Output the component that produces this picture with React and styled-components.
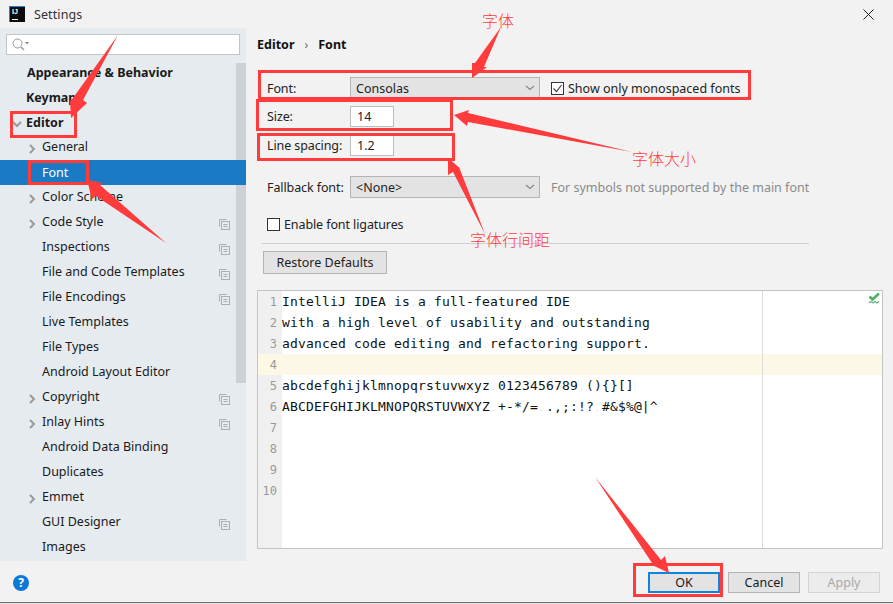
import React from 'react';
import styled, { createGlobalStyle } from 'styled-components';

const Global = createGlobalStyle`
  html, body { margin: 0; padding: 0; background: #fff; }
  * { box-sizing: border-box; }
  body { font-family: "Noto Sans", "Noto Sans CJK SC", sans-serif; font-size: 12.5px; color: #1a1a1a; }
`;
const Dialog = styled.div`
  position: relative; width: 893px; height: 604px; overflow: hidden;
  display: flex; flex-direction: column; background: #f2f2f2;
  border-bottom: 1px solid #e8e8e8;
`;
const TitleBar = styled.header`
  height: 28px; flex: none; display: flex; align-items: center; padding: 0 19px 0 9px;
`;
const Logo = styled.div`
  width: 16px; height: 16px; background: #0b0b0b; border-top: 1px solid #2a7fd0; border-left: 1px solid #2a7fd0;
  color: #fff; font: bold 7px/10px "Liberation Sans", sans-serif; padding-left: 2px; position: relative;
  &::after { content: ""; display: block; width: 6px; height: 1px; background: #fff; margin-top: 2px; }
`;
const Title = styled.span`
  margin-left: 9px; flex: 1; font-size: 12.5px; color: #333; letter-spacing: .1px;
`;
const Body = styled.div`
  flex: 1; display: flex; min-height: 0;
`;
const Sidebar = styled.aside`
  width: 246px; flex: none; background: #e6ebf0; display: flex; flex-direction: column; position: relative; overflow: hidden;
`;
const SearchBox = styled.div`
  flex: none; margin: 6px 6px 5px 6px; height: 21px; background: #fff; border: 1px solid #c4c4c4;
  display: flex; align-items: center; padding-left: 5px;
`;
const Tree = styled.ul`
  list-style: none; margin: 0; padding: 0; flex: 1; position: relative;
`;
const Row = styled.li`
  height: 25px; display: flex; align-items: center; position: relative;
  padding-bottom: ${p => (p.$bold || p.$selected ? 1 : 2)}px;
  padding-left: ${p => p.$indent}px;
  font-weight: ${p => (p.$bold ? 700 : 400)};
  background: ${p => (p.$selected ? '#1a7bc4' : 'transparent')};
  color: ${p => (p.$selected ? '#fff' : '#1a1a1a')};
  z-index: 1;
`;
const Chevron = styled.span`
  position: absolute; left: ${p => p.$left}px; top: 6px; width: 10px; height: 10px; display: block;
`;
const Badge = styled.span`
  position: absolute; left: 219px; top: 7px; width: 11px; height: 11px;
`;
const Scroll = styled.div`
  position: absolute; top: 35px; right: 0; width: 10px; height: 320px; background: #cdd0d4; z-index: 0;
`;
const Panel = styled.main`
  flex: 1; min-width: 0; display: flex; flex-direction: column; padding: 8px 10px 11px 11px;
`;
const Crumbs = styled.div`
  height: 17px; display: flex; align-items: center; font-weight: 700; font-size: 12.5px; gap: 10px; color: #111;
`;
const Sep = styled.span`
  font-weight: 400; color: #666; font-size: 12px;
`;
const FormRow = styled.div`
  display: flex; align-items: center; padding-left: 10px; height: ${p => p.$h || 22}px; margin-top: ${p => p.$mt || 0}px;
`;
const Label = styled.label`
  width: 83px; flex: none; color: #222; letter-spacing: -.1px;
`;
const Select = styled.div`
  width: 190px; height: 22px; background: #e3e3e3; border: 1px solid #b4b4b4; display: flex; align-items: center;
  justify-content: space-between; padding: 0 4px 0 5px; font-size: 12.5px; color: #222;
`;
const Input = styled.div`
  width: 44px; height: ${p => p.$h || 21}px; background: #fff; border: 1px solid #bdbdbd; display: flex; align-items: center;
  padding-left: 6px; color: #222;
`;
const Check = styled.span`
  width: 13px; height: 13px; flex: none; background: #fff; border: 1px solid #333; display: flex; align-items: center; justify-content: center;
  margin-left: ${p => p.$ml || 0}px;
`;
const CheckText = styled.span`
  margin-left: 4px; color: #222; letter-spacing: ${p => (p.$tight ? '-.1px' : '0')};
`;
const Hint = styled.span`
  margin-left: 11px; color: #8a8a8a;
`;
const Divider = styled.hr`
  width: 547px; height: 1px; margin: 12px 0 0 5px; border: 0; background: #cfcfcf; flex: none;
`;
const Restore = styled.button`
  width: 124px; height: 23px; margin: 7px 0 0 6px; flex: none; background: #e3e3e3; border: 1px solid #b4b4b4;
  font: inherit; color: #222; padding: 0;
`;
const Editor = styled.section`
  flex: none; height: 259px; margin-top: 16px; background: #fff; border: 1px solid #c4c4c4; position: relative; display: flex; width: 626px;
`;
const Gutter = styled.div`
  width: 24px; flex: none; background: #f0f0f0;
`;
const Lines = styled.div`
  flex: 1; position: relative; font: 13px/21px "DejaVu Sans Mono", monospace; letter-spacing: .17px; color: #111;
`;
const Line = styled.div`
  height: 21.05px; white-space: pre; margin-left: -24px; padding-left: 24px; position: relative;
  background: ${p => (p.$current ? '#fdf8e6' : 'transparent')};
`;
const Num = styled.span`
  position: absolute; left: 0; top: 1px; width: 19px; text-align: right; color: #9a9a9a; font-size: 12px; letter-spacing: 0;
`;
const Dot = styled.span`
  display: inline-block; width: 8px; height: 21px; vertical-align: top;
  background: linear-gradient(#d0d0d0, #d0d0d0) 3px 14px / 1px 1px no-repeat;
`;
const Margin = styled.div`
  position: absolute; left: 504px; top: 0; bottom: 0; width: 1px; background: #dcdcdc;
`;
const Mark = styled.span`
  position: absolute; right: 1px; top: 1px; width: 13px; height: 13px;
`;
const Footer = styled.footer`
  flex: none; display: flex; align-items: center; padding: 2px 13px 0 13px; border-bottom: 1px solid #6b6b6b; height: 42px;
`;
const Help = styled.span`
  width: 16px; height: 16px; border-radius: 50%; background: #0f78d7; color: #fff; font-size: 12px; font-weight: 700;
  display: flex; align-items: center; justify-content: center; margin-right: auto;
`;
const Btn = styled.button`
  width: 72px; height: 21px; margin-left: ${p => p.$ml || 0}px; padding: 0; font: inherit; background: #e3e3e3;
  border: ${p => (p.$primary ? '2px solid #0f84de' : '1px solid #b4b4b4')};
  color: ${p => (p.$off ? '#a8a8a8' : '#1a1a1a')};
  ${p => p.$off && 'background:#ececec;border-color:#d4d4d4;'}
`;
const Overlay = styled.svg`
  position: absolute; inset: 0; width: 893px; height: 604px; z-index: 5; pointer-events: none;
`;
const RedBox = styled.div`
  position: absolute; z-index: 6; left: ${p => p.$x}px; top: ${p => p.$y}px; width: ${p => p.$w}px; height: ${p => p.$h}px;
  border: 3px solid #ff3b3b;
`;
const Note = styled.span`
  position: absolute; z-index: 7; left: ${p => p.$x}px; top: ${p => p.$y}px; color: #ff3b3b;
  font: 300 16px/20px "Noto Sans CJK SC", sans-serif; white-space: nowrap;
`;

const Arrowhead = ({ d }) => <path d={d} fill="#ff3b3b" />;

const ChevR = () => (
  <svg width="10" height="10" viewBox="0 0 10 10"><path d="M3 1l4 4-4 4" fill="none" stroke="#9a9a9a" strokeWidth="2" /></svg>
);
const ChevD = () => (
  <svg width="10" height="10" viewBox="0 0 10 10"><path d="M1 3l4 4 4-4" fill="none" stroke="#9a9a9a" strokeWidth="2" /></svg>
);
const Copy = () => (
  <svg width="11" height="11" viewBox="0 0 11 11" fill="none" stroke="#a8b0b6"><path d="M.5 7.5v-7h7" /><rect x="2.5" y="2.5" width="8" height="8" /><path d="M4.5 5.5h4M4.5 7.5h4" /></svg>
);
const Caret = () => (
  <svg width="10" height="6" viewBox="0 0 10 6"><path d="M1 1l4 3.5L9 1" fill="none" stroke="#888" strokeWidth="1.2" /></svg>
);

const rows = [
  { t: 'Appearance & Behavior', i: 27, b: 1 },
  { t: 'Keymap', i: 26, b: 1 },
  { t: 'Editor', i: 26, b: 1, down: 1 },
  { t: 'General', i: 42, c: 1 },
  { t: 'Font', i: 42, s: 1 },
  { t: 'Color Scheme', i: 42, c: 1 },
  { t: 'Code Style', i: 42, c: 1, k: 1 },
  { t: 'Inspections', i: 42, k: 1 },
  { t: 'File and Code Templates', i: 42, k: 1 },
  { t: 'File Encodings', i: 42, k: 1 },
  { t: 'Live Templates', i: 42 },
  { t: 'File Types', i: 42 },
  { t: 'Android Layout Editor', i: 42 },
  { t: 'Copyright', i: 42, c: 1, k: 1 },
  { t: 'Inlay Hints', i: 42, c: 1, k: 1 },
  { t: 'Android Data Binding', i: 42 },
  { t: 'Duplicates', i: 42 },
  { t: 'Emmet', i: 42, c: 1 },
  { t: 'GUI Designer', i: 42, k: 1 },
  { t: 'Images', i: 42 },
];

const code = [
  'IntelliJ IDEA is a full-featured IDE',
  'with a high level of usability and outstanding',
  'advanced code editing and refactoring support.',
  '',
  'abcdefghijklmnopqrstuvwxyz 0123456789 (){}[]',
  'ABCDEFGHIJKLMNOPQRSTUVWXYZ +-*/= .,;:!? #&$%@|^',
  '', '', '', '',
];

const CodeText = ({ text }) =>
  text.split(' ').map((w, i) => (
    <React.Fragment key={i}>
      {i > 0 && <Dot />}
      {w}
    </React.Fragment>
  ));

export default function App() {
  return (
    <>
      <Global />
      <Dialog>
        <TitleBar>
          <Logo>IJ</Logo>
          <Title>Settings</Title>
          <svg width="11" height="11" viewBox="0 0 11 11"><path d="M.5.5l10 10M10.5.5l-10 10" stroke="#222" strokeWidth="1" /></svg>
        </TitleBar>
        <Body>
          <Sidebar>
            <SearchBox>
              <svg width="18" height="13" viewBox="0 0 18 13" fill="none"><circle cx="5.5" cy="5.5" r="4.5" stroke="#9a9a9a" /><path d="M9 9l3 3" stroke="#9a9a9a" strokeWidth="1.4" /><path d="M13 4h4l-2 2.5z" fill="#888" /></svg>
            </SearchBox>
            <Scroll />
            <Tree>
              {rows.map(r => (
                <Row key={r.t} $indent={r.i} $bold={r.b} $selected={r.s}>
                  {r.c && <Chevron $left={27}><ChevR /></Chevron>}
                  {r.down && <Chevron $left={12}><ChevD /></Chevron>}
                  {r.t}
                  {r.k && <Badge><Copy /></Badge>}
                </Row>
              ))}
            </Tree>
          </Sidebar>
          <Panel>
            <Crumbs>Editor <Sep>›</Sep> Font</Crumbs>
            <FormRow $mt={24}>
              <Label>Font:</Label>
              <Select>Consolas <Caret /></Select>
              <Check $ml={11}>
                <svg width="11" height="11" viewBox="0 0 11 11"><path d="M1.5 5.5l3 3 5-6.5" fill="none" stroke="#444" strokeWidth="1.2" /></svg>
              </Check>
              <CheckText>Show only monospaced fonts</CheckText>
            </FormRow>
            <FormRow $mt={7} $h={21}>
              <Label>Size:</Label>
              <Input>14</Input>
            </FormRow>
            <FormRow $mt={7} $h={22}>
              <Label>Line spacing:</Label>
              <Input $h={22}>1.2</Input>
            </FormRow>
            <FormRow $mt={20}>
              <Label>Fallback font:</Label>
              <Select>&lt;None&gt; <Caret /></Select>
              <Hint>For symbols not supported by the main font</Hint>
            </FormRow>
            <FormRow $mt={20} $h={13}>
              <Check />
              <CheckText $tight>Enable font ligatures</CheckText>
            </FormRow>
            <Divider />
            <Restore>Restore Defaults</Restore>
            <Editor>
              <Gutter />
              <Lines>
                {code.map((l, i) => (
                  <Line key={i} $current={i === 3}>
                    <Num>{i + 1}</Num>
                    <CodeText text={l} />
                  </Line>
                ))}
              </Lines>
              <Margin />
              <Mark>
                <svg width="13" height="13" viewBox="0 0 13 13" fill="none"><path d="M1.5 4.5l3 3 6.5-6" stroke="#4fae68" strokeWidth="2.6" /><path d="M1 11l2-1.6 2 1.6 2-1.6 2 1.6 2-1.6" stroke="#5fb678" strokeWidth="1.2" /></svg>
              </Mark>
            </Editor>
          </Panel>
        </Body>
        <Footer>
          <Help>?</Help>
          <Btn $primary>OK</Btn>
          <Btn $ml={8}>Cancel</Btn>
          <Btn $ml={8} $off>Apply</Btn>
        </Footer>

        <Overlay viewBox="0 0 893 604">
          <Arrowhead d="M118 35L83 100L87 103L71 118L70 101L73 98Z" />
          <Arrowhead d="M166 243L100 185L103 183L87 180L92 199L96 196Z" />
          <Arrowhead d="M501 27L484 67L487 67L472 78L472 63L475 63Z" />
          <Arrowhead d="M632 152L468 113L469 110L454 115L467 126L468 122Z" />
          <Arrowhead d="M485 234L459 167L462 170L448 158L448 175L453 172Z" />
          <Arrowhead d="M595 477L661 560L665 556L669 573L650 564L654 566Z" />
        </Overlay>
        <RedBox $x={10} $y={111} $w={67} $h={27} />
        <RedBox $x={28} $y={160} $w={61} $h={25} />
        <RedBox $x={258} $y={70} $w={493} $h={30} />
        <RedBox $x={256} $y={99} $w={197} $h={32} />
        <RedBox $x={257} $y={133} $w={198} $h={28} />
        <RedBox $x={633} $y={563} $w={90} $h={34} />
        <Note $x={482} $y={10}>字体</Note>
        <Note $x={632} $y={148}>字体大小</Note>
        <Note $x={470} $y={229}>字体行间距</Note>
      </Dialog>
    </>
  );
}
